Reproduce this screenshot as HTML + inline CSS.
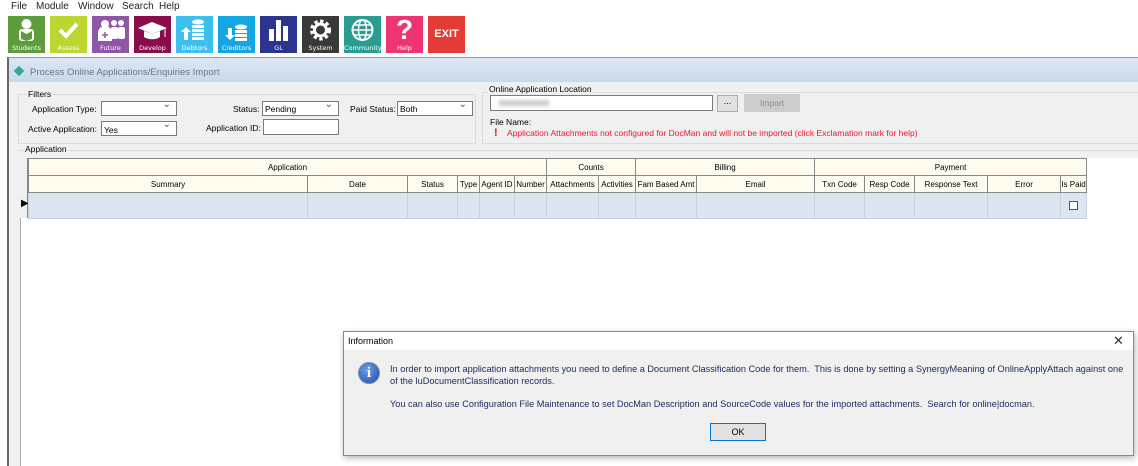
<!DOCTYPE html>
<html><head><meta charset="utf-8"><style>
*{box-sizing:border-box;margin:0;padding:0}
body{width:1138px;height:466px;overflow:hidden;background:#fff;font-family:"Liberation Sans",Tahoma,sans-serif;font-size:9px;color:#000;position:relative}
.a{position:absolute}
.menu span{position:absolute;top:1px;font-size:10px;color:#222}
.tile{position:absolute;top:16px;width:37px;height:37px;color:#fff;font-size:7px;text-align:center}
.tile .lb{position:absolute;bottom:1px;left:0;right:0;font-family:"DejaVu Sans",sans-serif;font-size:6.5px}
.box{position:absolute;background:#fff;border:1px solid #7a7a7a}
.combo::after{content:"⌄";position:absolute;right:5px;top:-3px;font-size:10px;color:#555}
.lbl{position:absolute;font-size:8.5px;white-space:nowrap}
table{border-collapse:collapse;position:absolute;top:158px;table-layout:fixed;width:1058px}
td{border:1px solid #888;background:#fffbef;font-size:8px;text-align:center;height:17px;padding:0;white-space:nowrap;overflow:hidden}
tr.d td{background:#dce6f1;height:26px;border-color:#c8d2de}
</style></head><body>
<div class="menu">
<span style="left:11px">File</span><span style="left:36px">Module</span><span style="left:78px">Window</span><span style="left:122px">Search</span><span style="left:159px">Help</span>
</div>
<div class="tile" style="left:8px;background:#5e9d3c"><svg width="37" height="28"><rect x="11" y="13" width="15" height="12" rx="3" fill="#fff"/><circle cx="18.5" cy="8" r="5" fill="#fff"/><path d="M13 15l5.5 3 5.5-3v8l-5.5 2-5.5-2z" fill="#5e9d3c"/></svg><div class="lb">Students</div></div>
<div class="tile" style="left:50px;background:#bcd630"><svg width="37" height="28"><path d="M10 14l6 6 11-12" stroke="#fff" stroke-width="4" fill="none"/></svg><div class="lb">Assess</div></div>
<div class="tile" style="left:92px;background:#8f56a8"><svg width="37" height="28"><circle cx="13" cy="8" r="4" fill="#fff"/><path d="M6 25v-8a7 7 0 0114 0v8z" fill="#fff"/><circle cx="22" cy="7" r="3" fill="#fff"/><circle cx="29" cy="7" r="3" fill="#fff"/><rect x="19" y="11" width="7" height="12" rx="2" fill="#fff"/><rect x="26" y="11" width="7" height="12" rx="2" fill="#fff"/><path d="M10 19h6M13 16v6" stroke="#8f56a8" stroke-width="1.5"/></svg><div class="lb">Future</div></div>
<div class="tile" style="left:134px;background:#8a0c4a"><svg width="37" height="28"><path d="M4 12l14-6 15 6-15 6z" fill="#fff"/><path d="M10 15v6c5 3 12 3 16 0v-6l-8 3z" fill="#fff"/><path d="M31 13v8" stroke="#fff"/></svg><div class="lb">Develop</div></div>
<div class="tile" style="left:176px;background:#3ec0ee"><svg width="37" height="28"><ellipse cx="22" cy="6" rx="6" ry="2.5" fill="#fff"/><rect x="16" y="9" width="12" height="3" fill="#fff"/><rect x="16" y="13" width="12" height="3" fill="#fff"/><rect x="16" y="17" width="12" height="3" fill="#fff"/><rect x="16" y="21" width="12" height="3" fill="#fff"/><path d="M8 24v-8h-3l5-5 5 5h-3v8z" fill="#fff"/></svg><div class="lb">Debtors</div></div>
<div class="tile" style="left:218px;background:#14a5e3"><svg width="37" height="28"><ellipse cx="23" cy="11" rx="6" ry="2.5" fill="#fff"/><rect x="17" y="14" width="12" height="3" fill="#fff"/><rect x="17" y="18" width="12" height="3" fill="#fff"/><rect x="17" y="22" width="12" height="3" fill="#fff"/><path d="M10 12v7h-3l5 5 5-5h-3v-7z" fill="#fff"/></svg><div class="lb">Creditors</div></div>
<div class="tile" style="left:260px;background:#2b3590"><svg width="37" height="28"><rect x="9" y="13" width="5" height="12" fill="#fff"/><rect x="16" y="4" width="5" height="21" fill="#fff"/><rect x="23" y="10" width="5" height="15" fill="#fff"/></svg><div class="lb">GL</div></div>
<div class="tile" style="left:302px;background:#393939"><svg width="37" height="28"><circle cx="18.5" cy="14" r="8" fill="none" stroke="#fff" stroke-width="5" stroke-dasharray="3 2.3"/><circle cx="18.5" cy="14" r="6" fill="none" stroke="#fff" stroke-width="3"/></svg><div class="lb">System</div></div>
<div class="tile" style="left:344px;background:#2a9d93"><svg width="37" height="28"><circle cx="18.5" cy="14" r="10" fill="none" stroke="#fff" stroke-width="2"/><ellipse cx="18.5" cy="14" rx="4" ry="10" fill="none" stroke="#fff" stroke-width="1.5"/><path d="M8.5 14h20M10 9h17M10 19h17" stroke="#fff" stroke-width="1.5"/></svg><div class="lb">Community</div></div>
<div class="tile" style="left:386px;background:#ec3571"><div style="font-size:28px;font-weight:bold;line-height:28px">?</div><div class="lb">Help</div></div>
<div class="tile" style="left:428px;background:#e63a36"><div style="font-size:11px;font-weight:bold;line-height:37px">EXIT</div></div>

<div class="a" style="left:7px;top:57px;width:1131px;height:409px;background:#f0f0f0;border-left:2px solid #666;border-top:1px solid #999"></div>
<div class="a" style="left:9px;top:58px;width:1129px;height:24px;background:linear-gradient(#dce7f2,#c9d9ea)"></div>
<div class="a" style="left:14px;top:66px;width:10px;height:10px;background:#3aa39a;transform:rotate(45deg) scale(.75)"></div>
<div class="lbl" style="left:30px;top:67px;font-size:9.5px;color:#6d7580">Process Online Applications/Enquiries Import</div>
<div class="a" style="left:13px;top:82px;width:1125px;height:384px;background:#f0f0f0"></div>

<div class="a" style="left:18px;top:94px;width:458px;height:50px;border:1px solid #dcdcdc"></div>
<div class="lbl" style="left:27px;top:89px;background:#f0f0f0;padding:0 1px">Filters</div>
<div class="lbl" style="left:32px;top:104px">Application Type:</div>
<div class="box combo" style="left:101px;top:101px;width:76px;height:15px"></div>
<div class="lbl" style="left:28px;top:124px">Active Application:</div>
<div class="box combo" style="left:101px;top:121px;width:76px;height:15px"><span class="lbl" style="left:2px;top:3px">Yes</span></div>
<div class="lbl" style="left:233px;top:104px">Status:</div>
<div class="box combo" style="left:262px;top:101px;width:77px;height:15px"><span class="lbl" style="left:2px;top:2px">Pending</span></div>
<div class="lbl" style="left:206px;top:123px">Application ID:</div>
<div class="box" style="left:263px;top:119px;width:76px;height:16px"></div>
<div class="lbl" style="left:350px;top:104px">Paid Status:</div>
<div class="box combo" style="left:397px;top:101px;width:76px;height:15px"><span class="lbl" style="left:2px;top:2px">Both</span></div>

<div class="a" style="left:482px;top:92px;width:656px;height:52px;border:1px solid #dcdcdc;border-right:none"></div>
<div class="lbl" style="left:488px;top:84px;background:#f0f0f0;padding:0 1px">Online Application Location</div>
<div class="box" style="left:490px;top:95px;width:223px;height:16px"><div class="a" style="left:8px;top:4px;width:50px;height:6px;background:#ccc;filter:blur(1.5px)"></div></div>
<div class="a" style="left:717px;top:95px;width:21px;height:17px;border:1px solid #adadad;background:#e1e1e1;text-align:center;font-size:9px">...</div>
<div class="a" style="left:744px;top:94px;width:56px;height:18px;border:1px solid #ccc;background:#ccc;color:#8a8a8a;text-align:center;line-height:17px;font-size:8.5px">Import</div>
<div class="lbl" style="left:490px;top:117px">File Name:</div>
<div class="lbl" style="left:494px;top:127px;color:#e81123;font-weight:bold;font-size:11px">!</div>
<div class="lbl" style="left:507px;top:128px;color:#f0142f">Application Attachments not configured for DocMan and will not be imported (click Exclamation mark for help)</div>

<div class="a" style="left:18px;top:150px;width:1120px;height:1px;background:#dcdcdc"></div>
<div class="lbl" style="left:24px;top:144px;background:#f0f0f0;padding:0 1px">Application</div>
<div class="a" style="left:20px;top:158px;width:1118px;height:308px;background:#fff;border-left:1px solid #aaa"></div>
<div class="a" style="left:20px;top:158px;width:8px;height:60px;background:#f0f0f0;border-right:1px solid #888"></div>
<div class="lbl" style="left:21px;top:198px;font-size:10px">▶</div>
<table style="left:28px">
<colgroup><col style="width:279px"><col style="width:100px"><col style="width:50px"><col style="width:22px"><col style="width:35px"><col style="width:32px"><col style="width:52px"><col style="width:37px"><col style="width:61px"><col style="width:118px"><col style="width:50px"><col style="width:50px"><col style="width:73px"><col style="width:73px"><col style="width:26px"></colgroup>
<tr><td colspan="6">Application</td><td colspan="2">Counts</td><td colspan="2">Billing</td><td colspan="5">Payment</td></tr>
<tr><td>Summary</td><td>Date</td><td>Status</td><td>Type</td><td>Agent ID</td><td>Number</td><td>Attachments</td><td>Activities</td><td>Fam Based Amt</td><td>Email</td><td>Txn Code</td><td>Resp Code</td><td>Response Text</td><td>Error</td><td>Is Paid</td></tr>
<tr class="d"><td></td><td></td><td></td><td></td><td></td><td></td><td></td><td></td><td></td><td></td><td></td><td></td><td></td><td></td><td><div style="width:9px;height:9px;border:1px solid #555;background:#fff;margin:0 auto"></div></td></tr>
</table>

<div class="a" style="left:343px;top:331px;width:791px;height:125px;background:#f0f0f0;border:1px solid #888;box-shadow:1px 2px 6px rgba(0,0,0,.3)">
<div class="a" style="left:0;top:0;width:789px;height:18px;background:#fff"></div>
<div class="lbl" style="left:4px;top:4px;font-size:9px">Information</div>
<div class="lbl" style="left:769px;top:1px;font-size:13px;color:#333">✕</div>
<div class="a" style="left:14px;top:30px;width:22px;height:22px;border-radius:50%;background:radial-gradient(circle at 40% 35%,#6fa0e8,#1b49a8);border:1px solid #7c8aa8;color:#fff;font-weight:bold;font-family:'Liberation Serif',serif;font-size:15px;text-align:center;line-height:21px">i</div>
<div class="lbl" style="left:46px;top:31px;font-size:9.2px;color:#1a2a5a;line-height:12px">In order to import application attachments you need to define a Document Classification Code for them.&nbsp; This is done by setting a SynergyMeaning of OnlineApplyAttach against one<br>of the luDocumentClassification records.</div>
<div class="lbl" style="left:46px;top:67px;font-size:9.2px;color:#1a2a5a">You can also use Configuration File Maintenance to set DocMan Description and SourceCode values for the imported attachments.&nbsp; Search for online|docman.</div>
<div class="a" style="left:366px;top:91px;width:56px;height:18px;border:1px solid #0078d7;background:#e1e1e1;text-align:center;line-height:16px;font-size:9px">OK</div>
</div>
</body></html>
